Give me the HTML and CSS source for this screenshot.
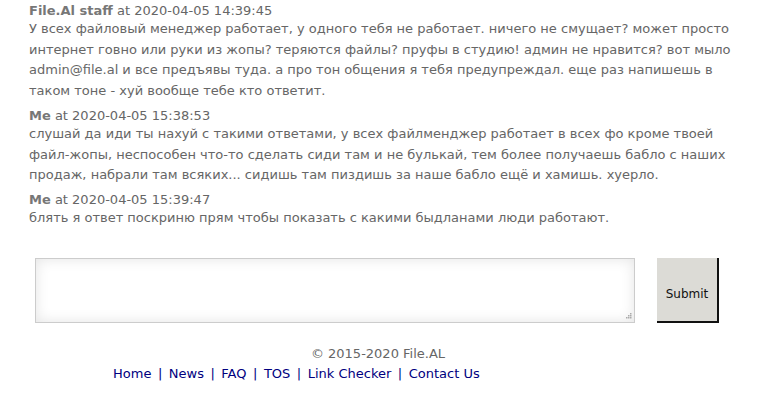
FILE: index.html
```html
<!DOCTYPE html>
<html>
<head>
<meta charset="utf-8">
<link rel="stylesheet" href="styles.css">
</head>
<body>
<div class="thread">
  <div class="msg">
    <div class="head"><b>File.Al staff</b> at 2020-04-05 14:39:45</div>
    <div class="text">У всех файловый менеджер работает, у одного тебя не работает. ничего не смущает? может просто интернет говно или руки из жопы? теряются файлы? пруфы в студию! админ не нравится? вот мыло admin@file.al и все предъявы туда. а про тон общения я тебя предупреждал. еще раз напишешь в таком тоне - хуй вообще тебе кто ответит.</div>
  </div>
  <div class="msg">
    <div class="head"><b>Me</b> at 2020-04-05 15:38:53</div>
    <div class="text">слушай да иди ты нахуй с такими ответами, у всех файлменджер работает в всех фо кроме твоей файл-жопы, неспособен что-то сделать сиди там и не булькай, тем более получаешь бабло с наших продаж, набрали там всяких... сидишь там пиздишь за наше бабло ещё и хамишь. хуерло.</div>
  </div>
  <div class="msg">
    <div class="head"><b>Me</b> at 2020-04-05 15:39:47</div>
    <div class="text">блять я ответ поскриню прям чтобы показать с какими быдланами люди работают.</div>
  </div>
</div>
<form class="reply">
  <div class="box-wrap">
    <textarea class="reply-box"></textarea>
    <span class="grip">
      <svg width="7" height="7" viewBox="0 0 7 7"><g fill="#aaa"><rect x="5" y="0" width="1.5" height="1.5"/><rect x="3" y="2" width="1.5" height="1.5"/><rect x="5" y="2" width="1.5" height="1.5"/><rect x="1" y="4" width="1.5" height="1.5"/><rect x="3" y="4" width="1.5" height="1.5"/><rect x="5" y="4" width="1.5" height="1.5"/></g></svg>
    </span>
  </div>
  <button type="button" class="submit">Submit</button>
</form>
<div class="footer">
  <div class="copy">© 2015-2020 File.AL</div>
  <div class="links"><a href="#">Home</a><span class="sep">|</span><a href="#">News</a><span class="sep">|</span><a href="#">FAQ</a><span class="sep">|</span><a href="#">TOS</a><span class="sep">|</span><a href="#">Link Checker</a><span class="sep">|</span><a href="#">Contact Us</a></div>
</div>
</body>
</html>
```
FILE: styles.css
```css
html, body {
  margin: 0;
  padding: 0;
  background: #fff;
}
body {
  font-family: "DejaVu Sans", Verdana, sans-serif;
  font-size: 13px;
  color: #666;
}
.thread {
  padding: 3px 30px 0 29px;
  display: flex;
  flex-direction: column;
  gap: 6px;
}
.head {
  line-height: 16px;
  color: #666;
}
.head b {
  color: #777;
}
.text {
  line-height: 20.7px;
}
.reply {
  display: flex;
  align-items: flex-start;
  margin: 29px 0 0 35px;
  gap: 22px;
}
.box-wrap {
  position: relative;
  width: 600px;
  height: 65px;
}
.reply-box {
  display: block;
  width: 600px;
  height: 65px;
  box-sizing: border-box;
  border: 1px solid #ccc;
  box-shadow: inset 0 0 14px rgba(0,0,0,0.11);
  background: #fff;
  margin: 0;
  padding: 2px;
  resize: none;
  font-family: inherit;
}
.grip {
  position: absolute;
  right: 3px;
  bottom: 3px;
  width: 7px;
  height: 7px;
  line-height: 0;
}
.submit {
  width: 62px;
  height: 65px;
  box-sizing: border-box;
  background: #dcdbd6;
  border: 0;
  border-right: 2px solid #111;
  border-bottom: 2px solid #111;
  font-family: "DejaVu Sans", Tahoma, sans-serif;
  font-size: 12px;
  color: #111;
  padding: 10px 0 0 0;
}
.footer {
  margin-top: 21px;
  line-height: 20px;
}
.copy {
  text-align: center;
  padding-right: 20px;
}
.links {
  padding-left: 113px;
  color: #000080;
}
.links a {
  color: #000080;
  text-decoration: none;
}
.sep {
  margin: 0 6.5px;
}
```
